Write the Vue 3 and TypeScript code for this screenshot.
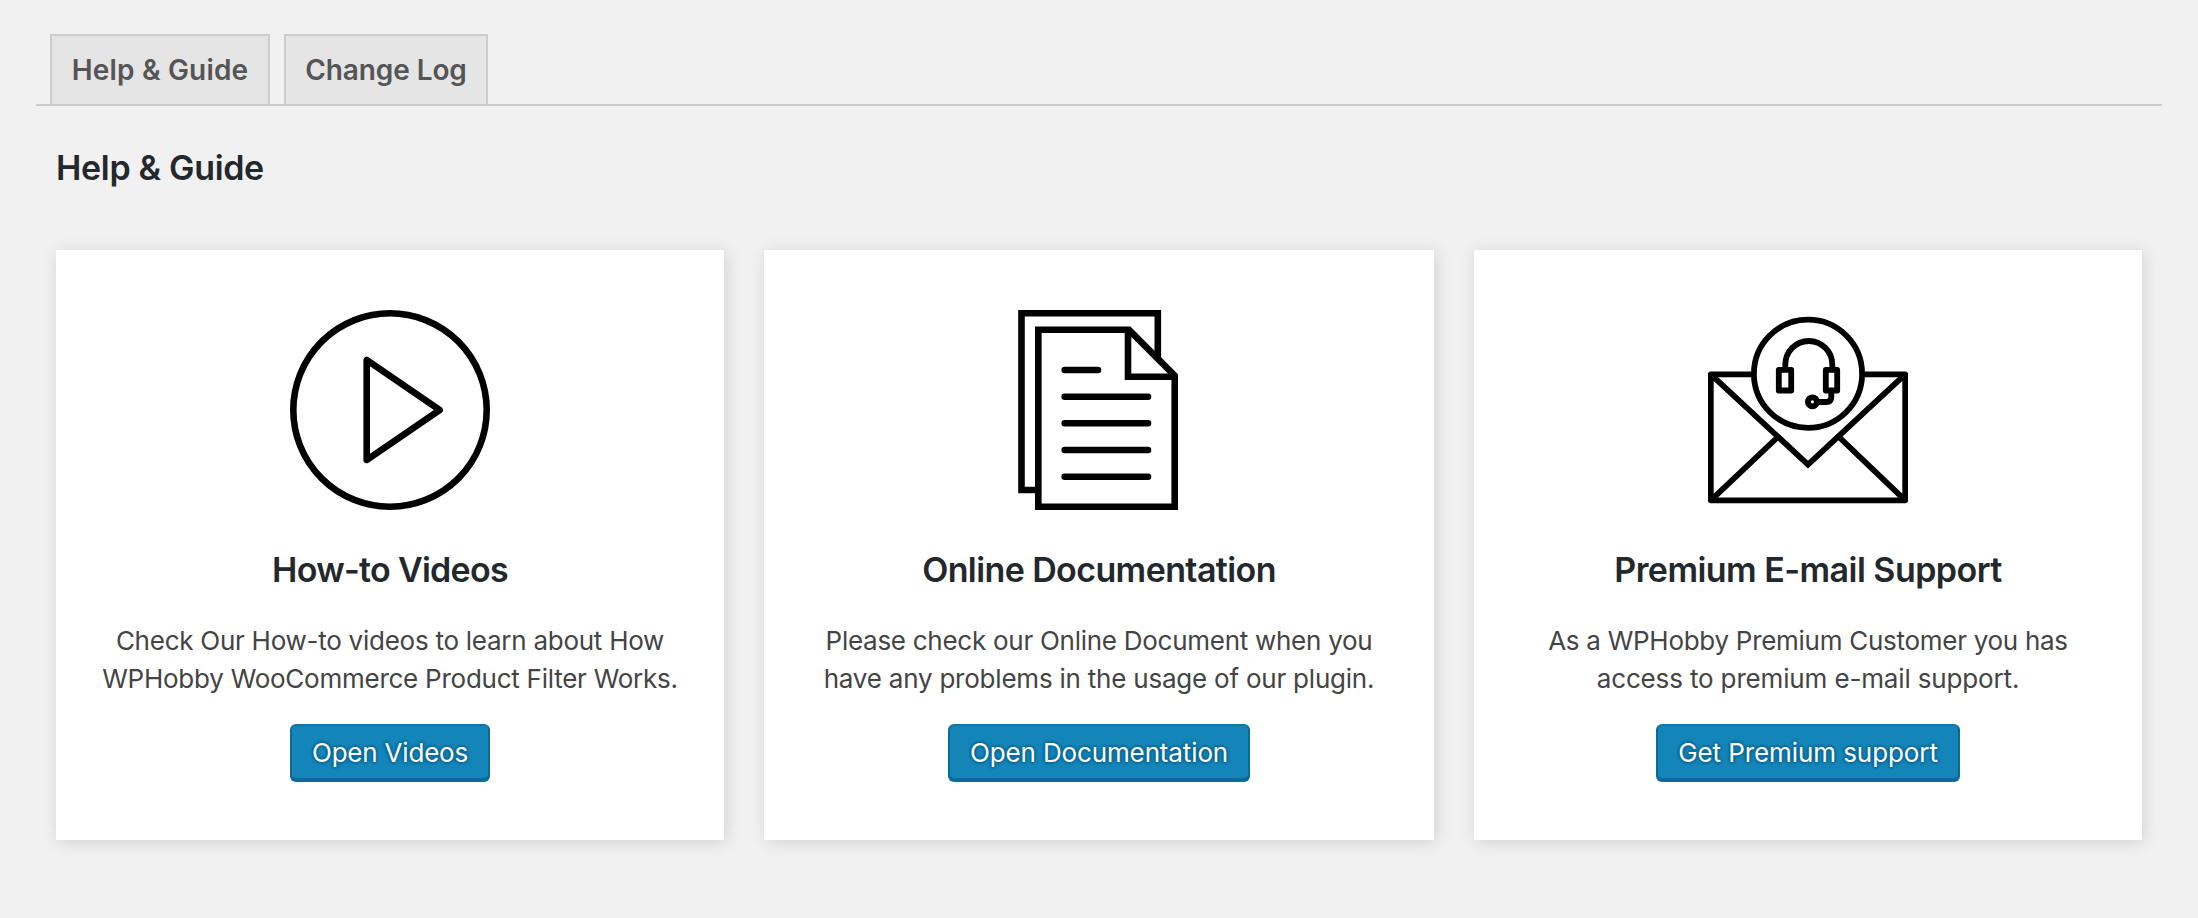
<script setup lang="ts">
interface GuideCard {
  id: 'videos' | 'docs' | 'support'
  title: string
  lines: string[]
  action: string
}

const tabs: { id: string; label: string }[] = [
  { id: 'help', label: 'Help & Guide' },
  { id: 'log', label: 'Change Log' },
]

const cards: GuideCard[] = [
  {
    id: 'videos',
    title: 'How-to Videos',
    lines: ['Check Our How-to videos to learn about How', 'WPHobby WooCommerce Product Filter Works.'],
    action: 'Open Videos',
  },
  {
    id: 'docs',
    title: 'Online Documentation',
    lines: ['Please check our Online Document when you', 'have any problems in the usage of our plugin.'],
    action: 'Open Documentation',
  },
  {
    id: 'support',
    title: 'Premium E-mail Support',
    lines: ['As a WPHobby Premium Customer you has', 'access to premium e-mail support.'],
    action: 'Get Premium support',
  },
]
</script>

<template>
  <main class="page">
    <nav class="tabs">
      <a v-for="tab in tabs" :key="tab.id" class="tab" :class="`tab--${tab.id}`">{{ tab.label }}</a>
    </nav>

    <h2 class="heading">Help &amp; Guide</h2>

    <section class="cards">
      <article v-for="card in cards" :key="card.id" class="card" :class="`card--${card.id}`">
        <svg v-if="card.id === 'videos'" class="icon" viewBox="0 0 200 200" stroke-width="6.6">
          <circle cx="100" cy="100" r="96.7" />
          <path d="M76.7 50V150L149.7 100Z" stroke-linejoin="round" />
        </svg>

        <svg v-else-if="card.id === 'docs'" class="icon" viewBox="0 0 200 200" stroke-width="6.6">
          <path d="M39 180H22.5V3.3H158.8V48" />
          <path class="paper" d="M39.3 19.8H130L175.7 65.7V196.7H39.3Z" />
          <path d="M129 20V66.7H175.7" />
          <path
            d="M65.7 60H99M65.7 86.7H149M65.7 113.3H149M65.7 140H149M65.7 166.7H149"
            stroke-linecap="round"
          />
        </svg>

        <svg v-else class="icon" viewBox="0 0 200 200" stroke-width="5.8">
          <path d="M46 64.3H2.8V190.3H197.2V64.3H154" stroke-linejoin="round" />
          <path d="M2.8 64.3L100 154.6L197.2 64.3M2.8 190.3L69.8 127M197.2 190.3L131 127" />
          <circle class="paper" cx="100" cy="63.7" r="54.1" />
          <path d="M77.3 59V54.5A23.5 23.5 0 0 1 124.3 54.5V59" />
          <path
            d="M70.8 59.8H83.2V80.5H70.8ZM117.8 59.8H129.2V80.5H117.8Z"
            stroke-linejoin="round"
          />
          <path d="M123.3 82V87Q123.3 92 118.3 92H109" />
          <circle cx="104.4" cy="91.8" r="4.5" />
        </svg>

        <h3 class="title">{{ card.title }}</h3>
        <p class="text">
          <span v-for="line in card.lines" :key="line" class="line">{{ line }}</span>
        </p>
        <button class="button" type="button">{{ card.action }}</button>
      </article>
    </section>
  </main>
</template>

<style>
body {
  margin: 0;
  background: #f1f1f1;
}
</style>

<style scoped>
.page {
  box-sizing: border-box;
  height: 918px;
  padding: 34px 36px 0;
  font-family: Inter, 'Open Sans', sans-serif;
  color: #444;
}

.tabs {
  display: flex;
  gap: 14px;
  padding-left: 14px;
  border-bottom: 2px solid #ccc;
}

.tab {
  box-sizing: border-box;
  height: 70px;
  padding: 10px 0;
  border: 2px solid #ccc;
  border-bottom: 0;
  background: #e5e5e5;
  color: #555;
  font-size: 28px;
  font-weight: 600;
  line-height: 48px;
  text-align: center;
  white-space: nowrap;
}

.tab--help {
  width: 220px;
  letter-spacing: 0.19px;
}

.tab--log {
  width: 204px;
  letter-spacing: -0.1px;
}

.heading {
  margin: 38px 0 0 20px;
  color: #23282d;
  font-size: 34px;
  font-weight: 600;
  line-height: 48px;
  letter-spacing: -0.32px;
}

.cards {
  display: grid;
  grid-template-columns: 668px 670px 668px;
  gap: 40px;
  margin: 58px 0 0 20px;
}

.card {
  box-sizing: border-box;
  display: flex;
  flex-direction: column;
  align-items: center;
  height: 590px;
  padding-top: 60px;
  background: #fff;
  box-shadow: 2px 2px 16px rgba(0, 0, 0, 0.13);
}

.card--videos {
  --title-tracking: -0.71px;
  --first-tracking: -0.26px;
  --last-tracking: -0.25px;
  --button-tracking: -0.2px;
  --button-width: 200px;
}

.card--docs {
  --title-tracking: -0.6px;
  --first-tracking: -0.27px;
  --last-tracking: -0.22px;
  --button-tracking: -0.13px;
  --button-width: 302px;
}

.card--support {
  --title-tracking: -0.54px;
  --first-tracking: -0.28px;
  --last-tracking: -0.15px;
  --button-tracking: -0.08px;
  --button-width: 304px;
}

.icon {
  display: block;
  width: 200px;
  height: 200px;
  fill: none;
  stroke: #000;
}

.paper {
  fill: #fff;
}

.title {
  margin: 38px 0 0;
  color: #23282d;
  font-size: 34px;
  font-weight: 600;
  line-height: 44px;
  letter-spacing: var(--title-tracking);
}

.text {
  margin: 30px 0 26px;
  font-size: 26px;
  line-height: 38px;
  text-align: center;
  white-space: nowrap;
}

.line {
  display: block;
  letter-spacing: var(--first-tracking);
}

.line:last-child {
  letter-spacing: var(--last-tracking);
}

.button {
  box-sizing: border-box;
  width: var(--button-width);
  height: 56px;
  padding: 2px 0 0;
  border: 2px solid #0c6a9b;
  border-top-color: #1075ab;
  border-radius: 6px;
  background: #1385b8;
  box-shadow: 0 2px 0 #0c6a9b;
  color: #fff;
  font-family: inherit;
  font-size: 26px;
  line-height: 50px;
  letter-spacing: var(--button-tracking);
  text-shadow: 0 -2px 2px #0c6a9b, 2px 0 2px #0c6a9b, 0 2px 2px #0c6a9b, -2px 0 2px #0c6a9b;
  white-space: nowrap;
}
</style>
